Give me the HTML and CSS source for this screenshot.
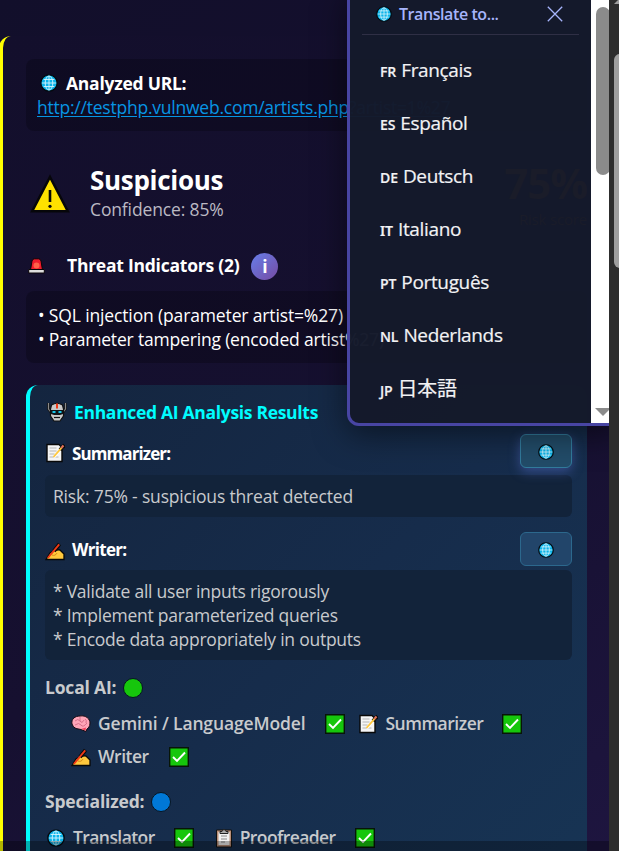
FILE: index.html
```html
<!DOCTYPE html>
<html lang="en">
<head>
<meta charset="utf-8">
<title>URL Analysis</title>
<link rel="stylesheet" href="styles.css">
</head>
<body>
<svg class="defs" width="0" height="0">
  <defs>
    <symbol id="globe" viewBox="0 0 18 18"><circle cx="9" cy="9" r="8.200" fill="#0cb4ea" stroke="#05080d" stroke-width="1.300"/><g fill="none" stroke="#d5f5fd" stroke-width=".9"><path d="M9 2v14M2 9h14M3.600 5.500h10.800M3.600 12.500h10.800"/><ellipse cx="9" cy="9" rx="3.800" ry="7"/></g></symbol>
    <symbol id="memo" viewBox="0 0 20 20"><path d="M2 1.500h12l3 3V18.500H2z" fill="#f5f5f5" stroke="#080808" stroke-width="1.400"/><path d="M4.500 5h7M4.500 8h7M4.500 11h5M4.500 14h9" stroke="#b5b5b5" stroke-width="1"/><path d="M9 14.500 18 4" stroke="#fff" stroke-width="2"/><path d="M15 7 19.500 2" stroke="#080808" stroke-width="3.600"/><path d="M8.500 14 16.500 4.800" stroke="#ffc83d" stroke-width="1.800"/><path d="m16.300 5 2.200-2.500" stroke="#e6745c" stroke-width="2"/></symbol>
    <symbol id="hand" viewBox="0 0 20 20"><path d="M1 18.500 5 12c2.500-2 6-3.500 10-3l4 4v5.500z" fill="#ffc83d" stroke="#080808" stroke-width="1.300"/><path d="M7 14c2 1 4 0 5-2" fill="none" stroke="#d68a16"/><path d="m9 10 5.500-7" stroke="#080808" stroke-width="3.800"/><path d="m2.800 17 11.400-13.600" stroke="#f03a17" stroke-width="1.900"/></symbol>
    <symbol id="check" viewBox="0 0 20 20"><path d="M.7.7h18.600v18.600H.7z" fill="#16c60c" stroke="#071507" stroke-width="1.400"/><path d="m4 10 4 4 8-8.500" fill="none" stroke="#fff" stroke-width="1.900"/></symbol>
  </defs>
</svg>
<div class="window">
  <main class="page">
    <section class="card">
      <div class="box url-box">
        <h2 class="label"><svg class="i18"><use href="#globe"/></svg><span>Analyzed URL:</span></h2>
        <a class="link" href="#">http://testphp.vulnweb.com/artists.php?artist=1%27</a>
      </div>
      <header class="verdict">
        <svg class="warn" viewBox="0 0 40 40"><path d="M20 3 37.800 37.200H2.200z" fill="#ffe100" stroke="#06060a" stroke-width="2.500"/><path d="M20 16v12" stroke="#080808" stroke-width="2.600"/><circle cx="20" cy="32.300" r="1.600" fill="#080808"/></svg>
        <div class="verdict-text"><h1>Suspicious</h1><p>Confidence: 85%</p></div>
      </header>
      <div class="threat-head">
        <svg class="siren" viewBox="0 0 17 16"><path d="M2.500 12 4 3Q4.500.8 6.500.8h4q2 0 2.500 2.200l1.500 9z" fill="#ee1b2c" stroke="#0b0508"/><circle cx="8.500" cy="7.500" r="3" fill="#ff6248"/><path d="M.7 11.500h15.600v3.500H.7z" fill="#ddd" stroke="#0b0508"/></svg>
        <h3>Threat Indicators (2)</h3><span class="info">i</span>
      </div>
      <div class="box threats"><p class="t-sql">• SQL injection (parameter artist=%27)</p><p>• Parameter tampering (encoded artist%27)</p></div>
      <section class="ai">
        <h3 class="ai-title"><svg class="robot" viewBox="0 0 20 20"><path d="M1.500 1v6l3 4M18.500 1v6l-3 4" fill="none" stroke="#111" stroke-width="2.600"/><path d="M1.500 1v6l3 4M18.500 1v6l-3 4" fill="none" stroke="#8b8b8b" stroke-width="1.200"/><path d="M4.500 3q5.500-3.500 11 0l1 4v7L13 19H7l-3.500-5V7z" fill="#c9c9c9" stroke="#111" stroke-width="1.200"/><path d="M10 1.500v5" stroke="#f03a17" stroke-width="2"/><path d="M4 8h12v4l-3 1H7l-3-1z" fill="#101418"/><path d="M5.500 10h3M11.500 10h3" stroke="#17c5e8" stroke-width="1.800"/><path d="M7 15.500h6" stroke="#111" stroke-width="1.200"/></svg><span>Enhanced AI Analysis Results</span></h3>
        <div class="tool-head"><svg class="i20"><use href="#memo"/></svg><h4>Summarizer:</h4><button class="tbtn hot" aria-label="Translate"><svg class="i16"><use href="#globe"/></svg></button></div>
        <div class="out"><p>Risk: 75% - suspicious threat detected</p></div>
        <div class="tool-head second"><svg class="i20"><use href="#hand"/></svg><h4>Writer:</h4><button class="tbtn" aria-label="Translate"><svg class="i16"><use href="#globe"/></svg></button></div>
        <div class="out tall"><p>* Validate all user inputs rigorously</p><p>* Implement parameterized queries</p><p>* Encode data appropriately in outputs</p></div>
        <div class="group"><b>Local AI:</b><i class="dot green"></i></div>
        <div class="models">
          <svg class="i20" viewBox="0 0 20 20"><path d="M1 10C0 5 4 2 9 2c6-1 10 3 10 7 0 4-2 5-3 6l-1 2.500-5-2-5-1q-3-1-4-4.500z" fill="#ffa5b8" stroke="#160a12"/><path d="M4 7q3-3 5 0t4-1M9 3v4M4 11q4-3 6 0t6-2M14 5q2 1 1 4" fill="none" stroke="#d86f89"/><path d="m10 15 5-1.500-.5 3z" fill="#f0425a"/></svg>
          <span class="m-gem">Gemini / LanguageModel</span><svg class="i20"><use href="#check"/></svg>
          <svg class="i20 gap"><use href="#memo"/></svg><span>Summarizer</span><svg class="i20"><use href="#check"/></svg>
        </div>
        <div class="models row2"><svg class="i20"><use href="#hand"/></svg><span>Writer</span><svg class="i20"><use href="#check"/></svg></div>
        <div class="group spec"><b>Specialized:</b><i class="dot blue"></i></div>
        <div class="models row3">
          <svg class="i18"><use href="#globe"/></svg><span>Translator</span><svg class="i20"><use href="#check"/></svg>
          <svg class="i20 clip" viewBox="0 0 20 20"><path d="M2.500 2h15v17h-15z" fill="#b98f78" stroke="#111"/><path d="M4.500 4h11v13h-11z" fill="#f1f1f1"/><path d="M6 3.500h2l2-2.500 2 2.500h2v2H6z" fill="#aaa" stroke="#222"/><path d="M7 8h6M7 11h6M7 14h4" stroke="#888"/></svg><span>Proofreader</span><svg class="i20"><use href="#check"/></svg>
        </div>
      </section>
    </section>
  </main>
  <div class="outer-bar"><i class="outer-up"></i><i class="outer-thumb"></i></div>
  <aside class="menu">
    <div class="menu-body">
      <header><svg class="i16"><use href="#globe"/></svg><span>Translate to...</span><svg class="close" viewBox="0 0 16 16"><path d="m.8.8 14.400 14.400M15.200.8.8 15.200" stroke="#a6b4fc" stroke-width="1.300"/></svg></header>
      <ul>
        <li><small>FR</small><span>Français</span></li><li><small>ES</small><span>Español</span></li><li><small>DE</small><span>Deutsch</span></li><li><small class="serif-i">IT</small><span>Italiano</span></li><li><small>PT</small><span>Português</span></li><li><small>NL</small><span>Nederlands</span></li><li><small>JP</small><span class="l-jp">日本語</span></li>
      </ul>
    </div>
    <div class="menu-bar"><i class="menu-thumb"></i><i class="menu-down"></i></div>
  </aside>
  <div class="risk"><b>75%</b><span>Risk score</span></div>
  <div class="bottom-shade"></div>
</div>
</body>
</html>
```

FILE: styles.css
```css
* { box-sizing: border-box; }
body { margin: 0; background: #fff; font: 17.500px/24px "Open Sans", "Noto Sans CJK JP", sans-serif; letter-spacing: -.18px; color: #fff; }
h1, h2, h3, h4, p, ul { margin: 0; padding: 0; font-size: inherit; }
h3, h4, b { font-weight: 700; }
svg { flex: none; display: block; }
span, p, h1, h3, h4, b, a { white-space: nowrap; }
.defs { position: absolute; }
.window { position: relative; width: 619px; height: 851px; display: flex; overflow: hidden; }
.page { width: 609px; height: 851px; padding-top: 36px; overflow: hidden; background: linear-gradient(150deg, #120f2b, #160f30 55%, #201744); }
.card { margin-left: -1px; height: 900px; border-left: 4px solid #ff0; border-radius: 12px; padding: 23px 22px 0 23px; background: linear-gradient(150deg, #130f2c, #161030 55%, #1f1642); }
.box { border-radius: 8px; background: rgba(0,0,0,.22); padding: 12px; overflow: hidden; }
.url-box { height: 72px; padding-left: 11px; }
.label { display: flex; align-items: center; height: 24px; gap: 8px; padding-left: 3px; font-weight: 700; letter-spacing: -.25px; }
.i16 { width: 16px; height: 16px; }
.i18 { width: 18px; height: 18px; }
.i20 { width: 20px; height: 20px; }
.link { display: block; color: #0795e3; text-decoration: underline; text-underline-offset: 2px; letter-spacing: -.23px; }
.verdict { display: flex; height: 93px; padding: 33px 0 0 4px; }
.warn { width: 40px; height: 40px; margin-top: 10px; }
.verdict-text { padding-left: 20px; }
.verdict h1 { font-size: 26px; line-height: 33px; letter-spacing: -.3px; }
.verdict p { color: #bbb9c3; line-height: 24px; letter-spacing: -.14px; }
.threat-head { height: 67px; display: flex; align-items: center; padding: 17px 0 0 2px; }
.threat-head h3 { margin: -2px 12px 0 22px; letter-spacing: -.24px; }
.siren { width: 17px; height: 16px; }
.info { width: 27px; height: 27px; border-radius: 50%; background: linear-gradient(135deg, #667eea, #764ba2); text-align: center; line-height: 26px; font-weight: 700; }
.threats { height: 72px; }
.t-sql { letter-spacing: -.14px; }
.ai { height: 500px; margin-top: 22px; border-left: 4px solid #00fdff; border-radius: 12px; padding: 15px 15px 0; background: linear-gradient(135deg, #14253f, #162c4b 50%, #173454); }
.ai-title { display: flex; height: 24px; color: #00fdff; gap: 7px; padding-left: 2px; letter-spacing: -.31px; }
.robot { width: 20px; height: 20px; margin-top: 2px; }
.tool-head { display: flex; align-items: center; height: 34px; margin-top: 10px; }
.tool-head h4 { padding-left: 7px; margin-top: 5px; font-size: 17px; letter-spacing: -.9px; }
.tool-head > .i20 { margin-top: 4px; }
.second { margin-top: 15px; }
.second h4 { margin-top: 2px; letter-spacing: -.7px; }
.tbtn { margin: 0 0 0 auto; width: 52px; height: 34px; padding: 2px 1px 0 0; display: grid; place-items: center; border: 1px solid #2c688d; border-radius: 6px; background: #22456a; }
.hot { border-color: #327b9d; background: #224c69; box-shadow: 0 4px 12px rgba(102,126,234,.4); }
.out { margin-top: 7px; height: 42px; border-radius: 6px; padding: 9px 8px; background: #12233a; color: #c8cacd; }
.second + .out { margin-top: 4px; height: 90px; letter-spacing: -.25px; }
.group { display: flex; align-items: center; height: 24px; margin-top: 16px; color: #c8cacd; gap: 7px; letter-spacing: -.18px; }
.group b { margin-top: -2px; }
.dot { width: 20px; height: 20px; border: 1.5px solid #071522; border-radius: 50%; }
.green { background: #16c60c; }
.blue { background: #0078d7; }
.models { display: flex; align-items: center; height: 24px; margin-top: 12px; padding-left: 26px; color: #c8cacd; font-weight: 600; letter-spacing: -.48px; }
.models span { margin: -2px 19px 0 7px; }
.models .m-gem { letter-spacing: -.14px; margin-right: 20px; }
.models .gap { margin-left: 13px; }
.row2 { margin-top: 9px; }
.row2 svg:last-child { margin-left: 1px; }
.spec { margin-top: 21px; }
.row3 { padding-left: 2px; letter-spacing: -.58px; }
.row3 span { margin-left: 8px; }
.clip { margin-left: 20px; margin-right: -2px; }
.outer-bar { position: relative; width: 10px; background: #2d2d2d; overflow: hidden; }
.outer-thumb { position: absolute; left: 5px; top: 54px; width: 12px; height: 214px; border-radius: 6px; background: #9f9f9f; }
.outer-up { position: absolute; left: 5px; top: -1px; border: 5px solid transparent; border-bottom-color: #9f9f9f; border-top: 0; }
.menu { position: absolute; left: 347px; top: -12px; width: 274px; height: 438px; clip-path: inset(0 12px -60px -60px); border: 3px solid #4845a3; border-radius: 12px; display: flex; box-shadow: 0 8px 32px rgba(0,0,0,.5); background: rgba(20,25,43,.98); }
.menu-body { width: 241px; padding: 5px 12px 0; }
.menu header { display: flex; align-items: center; height: 39px; padding: 0 16px 3px 14px; border-bottom: 1px solid #2f2f45; color: #a6b4fc; font-size: 16px; font-weight: 600; letter-spacing: -.42px; }
.menu header span { margin-left: 7px; }
.close { width: 16px; height: 16px; margin-left: auto; }
.menu ul { list-style: none; padding-top: 8px; }
.menu li { display: flex; align-items: baseline; height: 53px; padding: 15px 17px 0 18px; font-size: 19px; color: #f2f2f4; letter-spacing: -.35px; -webkit-text-stroke: .2px #f2f2f4; }
.menu small { font-size: 14px; margin-right: 5px; font-weight: 600; letter-spacing: -.1px; }
.menu .serif-i { font-family: "Noto Sans", sans-serif; }
.l-jp { font-family: "Noto Sans CJK JP", sans-serif; font-size: 20px; }
.menu-bar { position: relative; width: 27px; background: #fff; }
.menu-thumb { position: absolute; left: 5px; top: 16px; width: 14px; height: 168px; border-radius: 7px; background: #8b8b8b; }
.menu-down { position: absolute; left: 4px; top: 417px; border: 8px solid transparent; border-top-color: #8b8b8b; border-bottom: 0; }
.risk { position: absolute; left: 490px; top: 159px; width: 97px; text-align: right; color: #1a1c29; font-size: 15px; }
.risk b { display: block; font-size: 42px; line-height: 48px; letter-spacing: -1px; }
.bottom-shade { position: absolute; left: 0; top: 841px; width: 609px; height: 10px; background: rgba(0,0,0,.3); }
```
